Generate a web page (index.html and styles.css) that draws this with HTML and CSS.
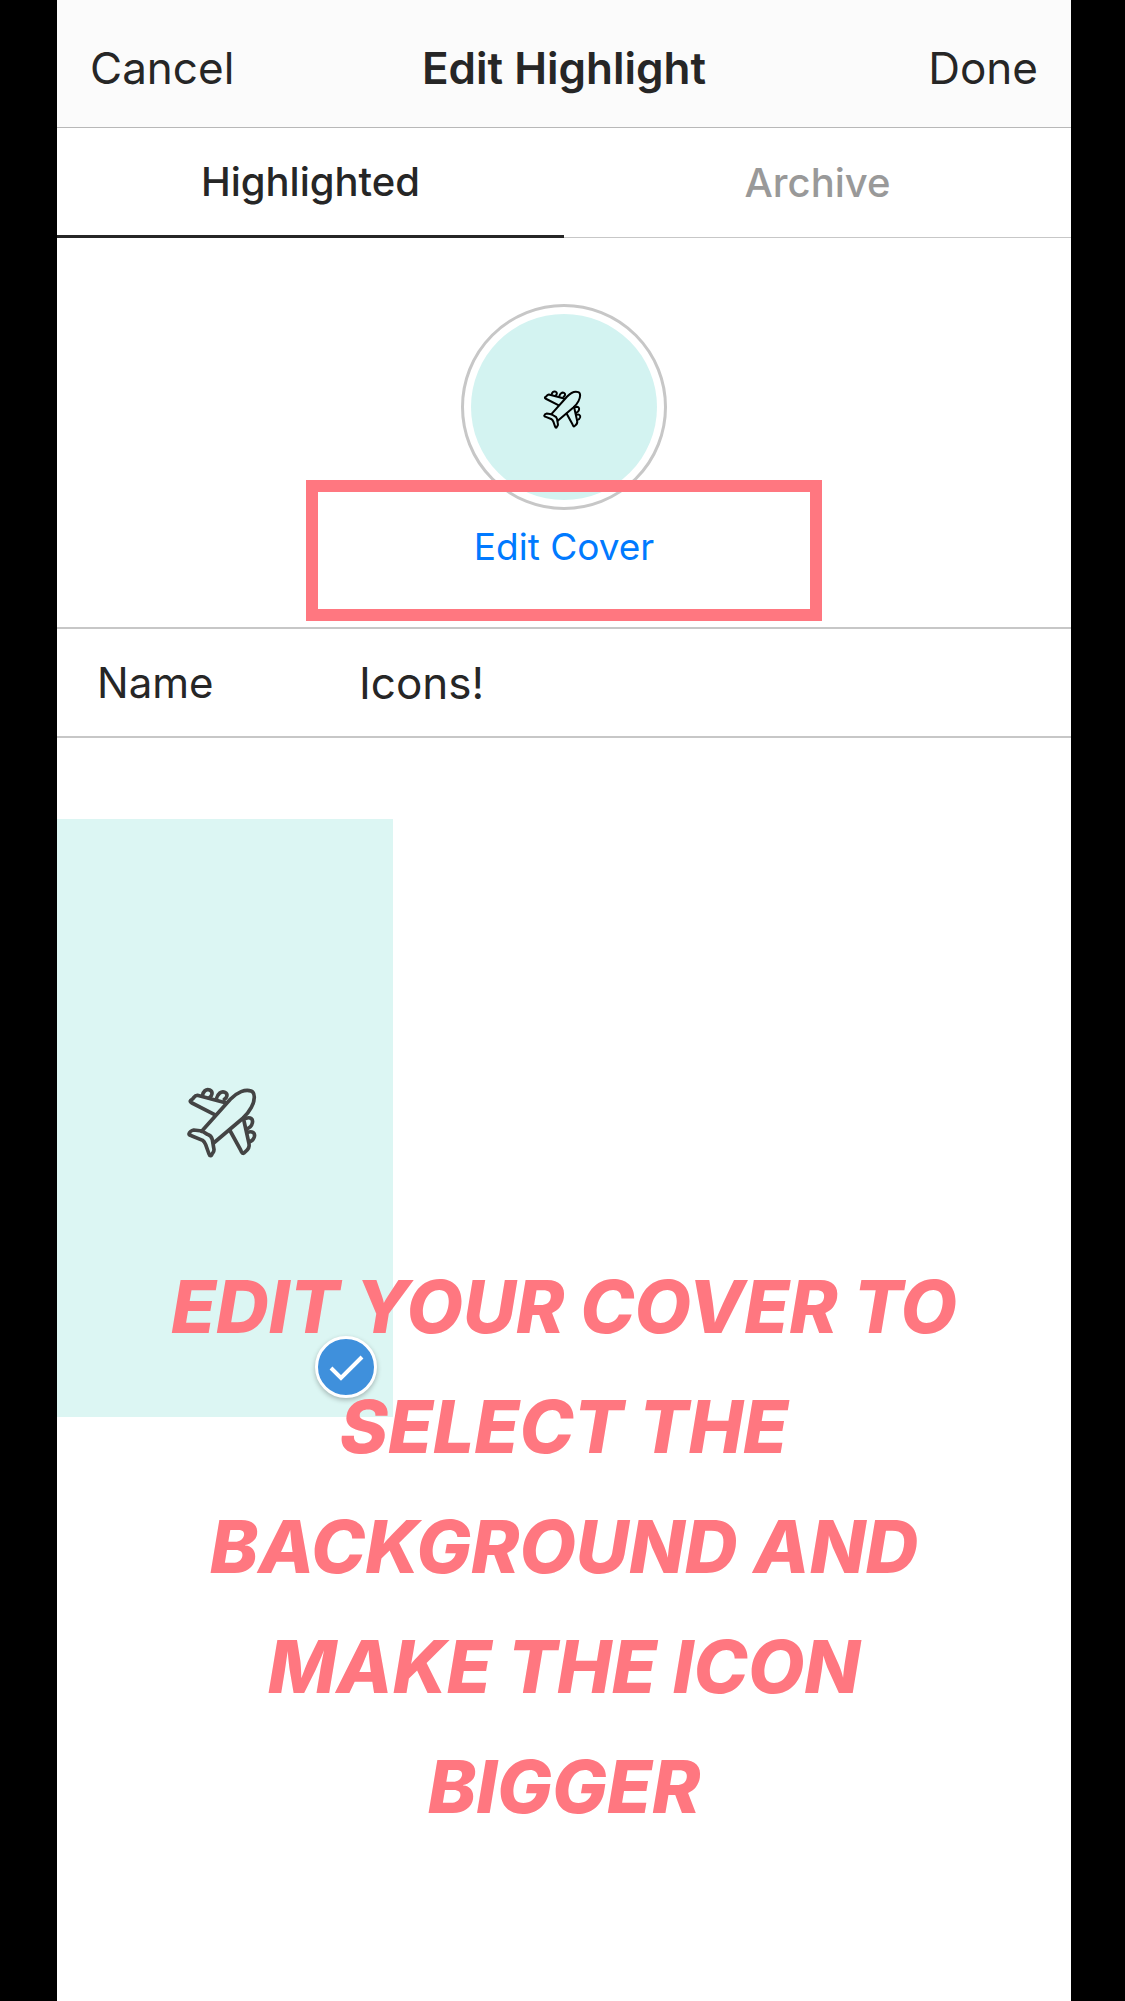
FILE: index.html
```html
<!DOCTYPE html>
<html lang="en">
<head>
<meta charset="utf-8">
<meta name="viewport" content="width=device-width, initial-scale=1">
<title>Edit Highlight</title>
<link rel="stylesheet" href="styles.css">
</head>
<body>
<svg class="defs" aria-hidden="true">
  <symbol id="plane" viewBox="45 24 240 240">
    <path d="M95 184 L181 88 C202 66 226 57 243 63 C257 68 255 92 244 112 C237 126 228 136 216 147 L131 219"/>
    <path d="M134 134 L66 99 C58 95 60 91 66 88 C73 84 72 76 82 76 L166 98"/>
    <path d="M97 78 C99 64 108 56 119 60 C130 65 127 77 118 83 M139 87 C143 71 154 62 165 67 C175 72 171 83 163 88"/>
    <path d="M179 180 L212 240 C217 253 221 252 226 245 C237 237 239 231 237 221 L220 144"/>
    <path d="M228 145 C241 140 250 147 247 159 C245 169 238 174 230 177 M233 187 C247 182 256 189 253 200 C250 210 245 214 237 215"/>
    <path d="M96 183 L71 180 C64 181 58 188 57 192 C57 196 61 196 66 198 L98 211 C103 214 105 219 107 224 L117 252 C119 259 125 258 126 252 C129 247 132 246 132 239 L127 209 C125 201 119 195 112 193 Z"/>
  </symbol>
</svg>
<main class="screen">
  <header class="bar">
    <button class="bar-button" type="button">Cancel</button>
    <h1 class="title">Edit Highlight</h1>
    <button class="bar-button bar-button-end" type="button">Done</button>
  </header>
  <nav class="tabs">
    <a class="tab tab-active" href="#highlighted" aria-current="page">Highlighted</a>
    <a class="tab" href="#archive">Archive</a>
  </nav>
  <section class="cover">
    <div class="ring"><div class="disc"><svg class="plane plane-small"><use href="#plane"/></svg></div></div>
    <button class="edit" type="button">Edit Cover</button>
    <div class="marker"></div>
  </section>
  <div class="field">
    <label class="field-label" for="name">Name</label>
    <input class="field-input" id="name" type="text" value="Icons!">
  </div>
  <section class="stories" id="highlighted">
    <div class="story">
      <svg class="plane"><use href="#plane"/></svg>
      <label class="check">
        <input class="check-input" type="checkbox" checked aria-label="Selected story">
        <svg class="check-mark" viewBox="0 0 62 62" aria-hidden="true"><path d="M16 32 L26 42 L47 21"/></svg>
      </label>
    </div>
    <p class="caption">EDIT YOUR COVER TO<br>SELECT THE<br>BACKGROUND AND<br>MAKE THE ICON<br>BIGGER</p>
  </section>
</main>
</body>
</html>
```
FILE: styles.css
```css
* {
  box-sizing: border-box;
}

body {
  margin: 0;
  padding: 0 54px 0 57px;
  background: #000;
  color: #262626;
  font-family: Inter, "Liberation Sans", sans-serif;
}

button {
  padding: 0;
  border: 0;
  background: none;
  color: inherit;
  font: inherit;
}

.defs {
  position: absolute;
  width: 0;
  height: 0;
}

.screen {
  min-height: 100vh;
  background: #fff;
}

.bar {
  display: grid;
  grid-template-columns: 1fr auto 1fr;
  align-items: center;
  height: 128px;
  padding: 8px 33px 0;
  border-bottom: 1px solid #b8b8b8;
  background: #fbfbfb;
  font-size: 44px;
}

.bar-button {
  justify-self: start;
}

.bar-button-end {
  justify-self: end;
}

.title {
  margin: 0;
  font-size: 44px;
  font-weight: 600;
}

.tabs {
  display: grid;
  grid-template-columns: 1fr 1fr;
  height: 110px;
}

.tab {
  display: flex;
  align-items: center;
  justify-content: center;
  border-bottom: 1px solid #c7c7c7;
  color: #999;
  font-size: 40px;
  font-weight: 500;
  text-decoration: none;
}

.tab-active {
  border-bottom: 3px solid #262626;
  color: #262626;
}

.cover {
  position: relative;
  display: flex;
  flex-direction: column;
  align-items: center;
  gap: 12px;
  height: 391px;
  padding-top: 66px;
  border-bottom: 2px solid #c7c7c7;
}

.ring {
  display: grid;
  place-items: center;
  width: 206px;
  height: 206px;
  border: 3px solid #c7c7c7;
  border-radius: 50%;
}

.disc {
  display: grid;
  place-items: center;
  width: 186px;
  height: 186px;
  border-radius: 50%;
  background: #d3f3f1;
}

.plane {
  width: 80px;
  height: 80px;
  fill: none;
  stroke: #444;
  stroke-width: 11;
  stroke-linecap: round;
  stroke-linejoin: round;
}

.plane-small {
  width: 44px;
  height: 44px;
  stroke: #000;
}

.edit {
  color: #007aff;
  font-size: 37px;
  line-height: 50px;
}

.marker {
  position: absolute;
  bottom: 6px;
  left: 50%;
  width: 516px;
  height: 141px;
  border: 12px solid #ff7780;
  transform: translateX(-50%);
  pointer-events: none;
}

.field {
  display: flex;
  align-items: center;
  height: 109px;
  padding: 0 40px;
  border-bottom: 2px solid #c7c7c7;
}

.field-label {
  flex: 0 0 262px;
  font-size: 42px;
}

.field-input {
  flex: 1;
  min-width: 0;
  padding: 0;
  border: 0;
  outline: 0;
  background: none;
  color: inherit;
  font-family: inherit;
  font-size: 44px;
}

.stories {
  display: grid;
  grid-template-columns: 1fr 1fr 1fr;
  align-items: start;
  padding-top: 81px;
}

.story {
  position: relative;
  display: grid;
  grid-area: 1 / 1;
  place-items: center;
  height: 598px;
  margin-right: 2px;
  background: #dcf6f3;
}

.check {
  position: absolute;
  right: 16px;
  bottom: 19px;
  width: 62px;
  height: 62px;
}

.check-input {
  width: 62px;
  height: 62px;
  margin: 0;
  border: 3px solid #fff;
  border-radius: 50%;
  background: #3f90dc;
  box-shadow: 0 2px 5px #0004;
  appearance: none;
}

.check-mark {
  position: absolute;
  inset: 0;
  fill: none;
  stroke: #fff;
  stroke-width: 4;
}

.caption {
  z-index: 1;
  grid-area: 1 / 1 / 2 / 4;
  margin: 428px 0 0;
  color: #ff7780;
  font-size: 73px;
  font-style: italic;
  font-weight: 800;
  line-height: 120px;
  text-align: center;
}
```
